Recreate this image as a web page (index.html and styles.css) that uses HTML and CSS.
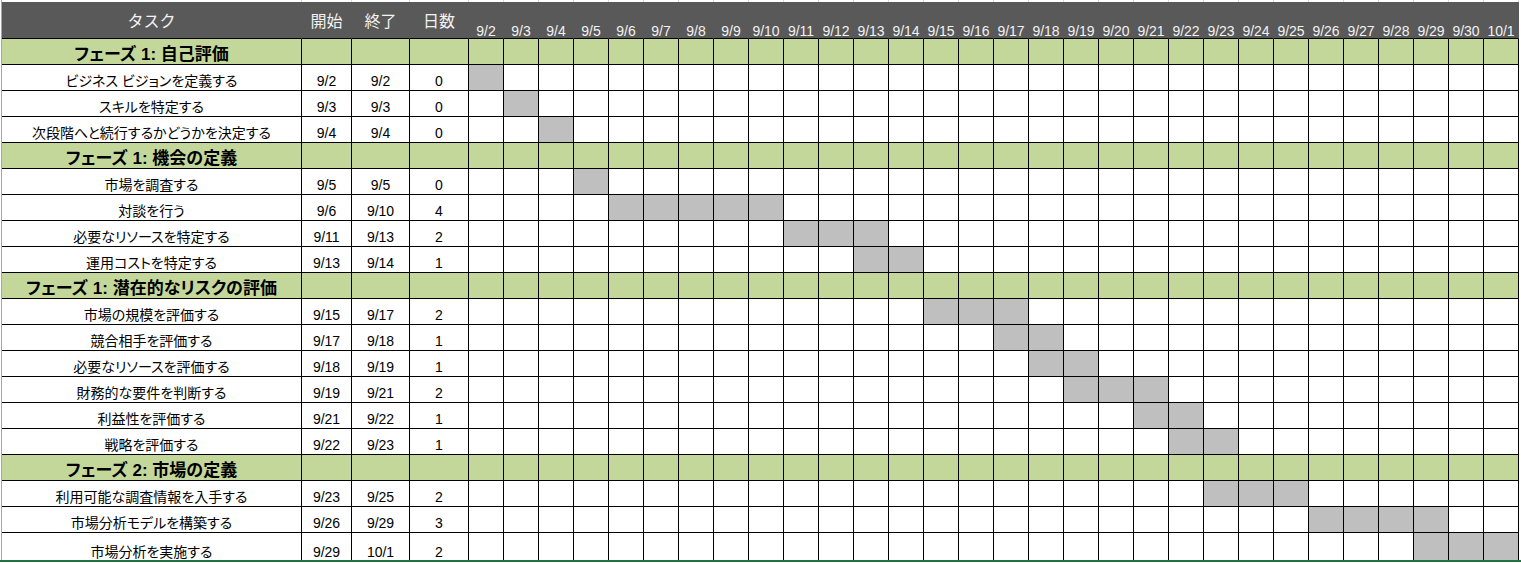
FILE: index.html
```html
<!DOCTYPE html>
<html lang="ja">
<head>
<meta charset="utf-8">
<title>ガントチャート</title>
<link rel="stylesheet" href="styles.css">
</head>
<body>
<div class="sheet">
  <div class="row strip">
    <span></span><span></span><span></span><span></span>
    <span></span><span></span><span></span><span></span><span></span><span></span><span></span><span></span><span></span><span></span>
    <span></span><span></span><span></span><span></span><span></span><span></span><span></span><span></span><span></span><span></span>
    <span></span><span></span><span></span><span></span><span></span><span></span><span></span><span></span><span></span><span></span>
  </div>
  <div class="row head">
    <span class="h">タスク</span><span class="h">開始</span><span class="h">終了</span><span class="h">日数</span>
    <span>9/2</span><span>9/3</span><span>9/4</span><span>9/5</span><span>9/6</span><span>9/7</span><span>9/8</span><span>9/9</span><span>9/10</span><span>9/11</span>
    <span>9/12</span><span>9/13</span><span>9/14</span><span>9/15</span><span>9/16</span><span>9/17</span><span>9/18</span><span>9/19</span><span>9/20</span><span>9/21</span>
    <span>9/22</span><span>9/23</span><span>9/24</span><span>9/25</span><span>9/26</span><span>9/27</span><span>9/28</span><span>9/29</span><span>9/30</span><span>10/1</span>
  </div>

  <div class="row phase">
    <span class="t">フェーズ 1: 自己評価</span><span></span><span></span><span></span>
    <span></span><span></span><span></span><span></span><span></span><span></span><span></span><span></span><span></span><span></span>
    <span></span><span></span><span></span><span></span><span></span><span></span><span></span><span></span><span></span><span></span>
    <span></span><span></span><span></span><span></span><span></span><span></span><span></span><span></span><span></span><span></span>
  </div>
  <div class="row">
    <span class="t">ビジネス ビジョンを定義する</span><span>9/2</span><span>9/2</span><span>0</span>
    <span class="on"></span><span></span><span></span><span></span><span></span><span></span><span></span><span></span><span></span><span></span>
    <span></span><span></span><span></span><span></span><span></span><span></span><span></span><span></span><span></span><span></span>
    <span></span><span></span><span></span><span></span><span></span><span></span><span></span><span></span><span></span><span></span>
  </div>
  <div class="row">
    <span class="t">スキルを特定する</span><span>9/3</span><span>9/3</span><span>0</span>
    <span></span><span class="on"></span><span></span><span></span><span></span><span></span><span></span><span></span><span></span><span></span>
    <span></span><span></span><span></span><span></span><span></span><span></span><span></span><span></span><span></span><span></span>
    <span></span><span></span><span></span><span></span><span></span><span></span><span></span><span></span><span></span><span></span>
  </div>
  <div class="row">
    <span class="t">次段階へと続行するかどうかを決定する</span><span>9/4</span><span>9/4</span><span>0</span>
    <span></span><span></span><span class="on"></span><span></span><span></span><span></span><span></span><span></span><span></span><span></span>
    <span></span><span></span><span></span><span></span><span></span><span></span><span></span><span></span><span></span><span></span>
    <span></span><span></span><span></span><span></span><span></span><span></span><span></span><span></span><span></span><span></span>
  </div>

  <div class="row phase">
    <span class="t">フェーズ 1: 機会の定義</span><span></span><span></span><span></span>
    <span></span><span></span><span></span><span></span><span></span><span></span><span></span><span></span><span></span><span></span>
    <span></span><span></span><span></span><span></span><span></span><span></span><span></span><span></span><span></span><span></span>
    <span></span><span></span><span></span><span></span><span></span><span></span><span></span><span></span><span></span><span></span>
  </div>
  <div class="row">
    <span class="t">市場を調査する</span><span>9/5</span><span>9/5</span><span>0</span>
    <span></span><span></span><span></span><span class="on"></span><span></span><span></span><span></span><span></span><span></span><span></span>
    <span></span><span></span><span></span><span></span><span></span><span></span><span></span><span></span><span></span><span></span>
    <span></span><span></span><span></span><span></span><span></span><span></span><span></span><span></span><span></span><span></span>
  </div>
  <div class="row">
    <span class="t">対談を行う</span><span>9/6</span><span>9/10</span><span>4</span>
    <span></span><span></span><span></span><span></span><span class="on"></span><span class="on"></span><span class="on"></span><span class="on"></span><span class="on"></span><span></span>
    <span></span><span></span><span></span><span></span><span></span><span></span><span></span><span></span><span></span><span></span>
    <span></span><span></span><span></span><span></span><span></span><span></span><span></span><span></span><span></span><span></span>
  </div>
  <div class="row">
    <span class="t">必要なリソースを特定する</span><span>9/11</span><span>9/13</span><span>2</span>
    <span></span><span></span><span></span><span></span><span></span><span></span><span></span><span></span><span></span><span class="on"></span>
    <span class="on"></span><span class="on"></span><span></span><span></span><span></span><span></span><span></span><span></span><span></span><span></span>
    <span></span><span></span><span></span><span></span><span></span><span></span><span></span><span></span><span></span><span></span>
  </div>
  <div class="row">
    <span class="t">運用コストを特定する</span><span>9/13</span><span>9/14</span><span>1</span>
    <span></span><span></span><span></span><span></span><span></span><span></span><span></span><span></span><span></span><span></span>
    <span></span><span class="on"></span><span class="on"></span><span></span><span></span><span></span><span></span><span></span><span></span><span></span>
    <span></span><span></span><span></span><span></span><span></span><span></span><span></span><span></span><span></span><span></span>
  </div>

  <div class="row phase">
    <span class="t">フェーズ 1: 潜在的なリスクの評価</span><span></span><span></span><span></span>
    <span></span><span></span><span></span><span></span><span></span><span></span><span></span><span></span><span></span><span></span>
    <span></span><span></span><span></span><span></span><span></span><span></span><span></span><span></span><span></span><span></span>
    <span></span><span></span><span></span><span></span><span></span><span></span><span></span><span></span><span></span><span></span>
  </div>
  <div class="row">
    <span class="t">市場の規模を評価する</span><span>9/15</span><span>9/17</span><span>2</span>
    <span></span><span></span><span></span><span></span><span></span><span></span><span></span><span></span><span></span><span></span>
    <span></span><span></span><span></span><span class="on"></span><span class="on"></span><span class="on"></span><span></span><span></span><span></span><span></span>
    <span></span><span></span><span></span><span></span><span></span><span></span><span></span><span></span><span></span><span></span>
  </div>
  <div class="row">
    <span class="t">競合相手を評価する</span><span>9/17</span><span>9/18</span><span>1</span>
    <span></span><span></span><span></span><span></span><span></span><span></span><span></span><span></span><span></span><span></span>
    <span></span><span></span><span></span><span></span><span></span><span class="on"></span><span class="on"></span><span></span><span></span><span></span>
    <span></span><span></span><span></span><span></span><span></span><span></span><span></span><span></span><span></span><span></span>
  </div>
  <div class="row">
    <span class="t">必要なリソースを評価する</span><span>9/18</span><span>9/19</span><span>1</span>
    <span></span><span></span><span></span><span></span><span></span><span></span><span></span><span></span><span></span><span></span>
    <span></span><span></span><span></span><span></span><span></span><span></span><span class="on"></span><span class="on"></span><span></span><span></span>
    <span></span><span></span><span></span><span></span><span></span><span></span><span></span><span></span><span></span><span></span>
  </div>
  <div class="row">
    <span class="t">財務的な要件を判断する</span><span>9/19</span><span>9/21</span><span>2</span>
    <span></span><span></span><span></span><span></span><span></span><span></span><span></span><span></span><span></span><span></span>
    <span></span><span></span><span></span><span></span><span></span><span></span><span></span><span class="on"></span><span class="on"></span><span class="on"></span>
    <span></span><span></span><span></span><span></span><span></span><span></span><span></span><span></span><span></span><span></span>
  </div>
  <div class="row">
    <span class="t">利益性を評価する</span><span>9/21</span><span>9/22</span><span>1</span>
    <span></span><span></span><span></span><span></span><span></span><span></span><span></span><span></span><span></span><span></span>
    <span></span><span></span><span></span><span></span><span></span><span></span><span></span><span></span><span></span><span class="on"></span>
    <span class="on"></span><span></span><span></span><span></span><span></span><span></span><span></span><span></span><span></span><span></span>
  </div>
  <div class="row">
    <span class="t">戦略を評価する</span><span>9/22</span><span>9/23</span><span>1</span>
    <span></span><span></span><span></span><span></span><span></span><span></span><span></span><span></span><span></span><span></span>
    <span></span><span></span><span></span><span></span><span></span><span></span><span></span><span></span><span></span><span></span>
    <span class="on"></span><span class="on"></span><span></span><span></span><span></span><span></span><span></span><span></span><span></span><span></span>
  </div>

  <div class="row phase">
    <span class="t">フェーズ 2: 市場の定義</span><span></span><span></span><span></span>
    <span></span><span></span><span></span><span></span><span></span><span></span><span></span><span></span><span></span><span></span>
    <span></span><span></span><span></span><span></span><span></span><span></span><span></span><span></span><span></span><span></span>
    <span></span><span></span><span></span><span></span><span></span><span></span><span></span><span></span><span></span><span></span>
  </div>
  <div class="row">
    <span class="t">利用可能な調査情報を入手する</span><span>9/23</span><span>9/25</span><span>2</span>
    <span></span><span></span><span></span><span></span><span></span><span></span><span></span><span></span><span></span><span></span>
    <span></span><span></span><span></span><span></span><span></span><span></span><span></span><span></span><span></span><span></span>
    <span></span><span class="on"></span><span class="on"></span><span class="on"></span><span></span><span></span><span></span><span></span><span></span><span></span>
  </div>
  <div class="row">
    <span class="t">市場分析モデルを構築する</span><span>9/26</span><span>9/29</span><span>3</span>
    <span></span><span></span><span></span><span></span><span></span><span></span><span></span><span></span><span></span><span></span>
    <span></span><span></span><span></span><span></span><span></span><span></span><span></span><span></span><span></span><span></span>
    <span></span><span></span><span></span><span></span><span class="on"></span><span class="on"></span><span class="on"></span><span class="on"></span><span></span><span></span>
  </div>
  <div class="row last">
    <span class="t">市場分析を実施する</span><span>9/29</span><span>10/1</span><span>2</span>
    <span></span><span></span><span></span><span></span><span></span><span></span><span></span><span></span><span></span><span></span>
    <span></span><span></span><span></span><span></span><span></span><span></span><span></span><span></span><span></span><span></span>
    <span></span><span></span><span></span><span></span><span></span><span></span><span></span><span class="on"></span><span class="on"></span><span class="on"></span>
  </div>
</div>
<div class="tabline"></div>
</body>
</html>
```

FILE: styles.css
```css
* {
  box-sizing: border-box;
  margin: 0;
  padding: 0;
}

html, body {
  background: #ffffff;
}

body {
  height: 563px;
  overflow: hidden;
  font-family: "Liberation Sans", "Noto Sans CJK JP", sans-serif;
  font-size: 14px;
  color: #000000;
}

.sheet {
  width: 1520px;
  margin-left: 1px;
  border-left: 1px solid #a6a6a6;
}

.row {
  display: grid;
  grid-template-columns: 300px 50px 58px 59px repeat(30, 35px);
}

.row > span {
  display: flex;
  align-items: flex-end;
  justify-content: center;
  height: 26px;
  padding-bottom: 2px;
  border-right: 1px solid #000000;
  border-bottom: 1px solid #000000;
  line-height: 1;
  white-space: nowrap;
}

.row > .t {
  font-feature-settings: "palt";
}

.strip > span {
  height: 2px;
  padding: 0;
  border-bottom: 0;
  border-right-color: #d9d9d9;
}

.head > span {
  height: 37px;
  padding-bottom: 0;
  background: #595959;
  color: #f2f2f2;
  border-right-color: #595959;
}

.head > .h {
  align-items: center;
  padding-top: 3px;
  font-size: 16px;
}

.phase > span {
  background: #c4d79b;
}

.phase > .t {
  padding-bottom: 1px;
  font-size: 17px;
  font-weight: bold;
}

.row > .on {
  background: #bfbfbf;
}

.last > span {
  height: 27px;
  padding-bottom: 1px;
  border-bottom: 0;
}

.tabline {
  height: 2px;
  background: #217346;
}
```
